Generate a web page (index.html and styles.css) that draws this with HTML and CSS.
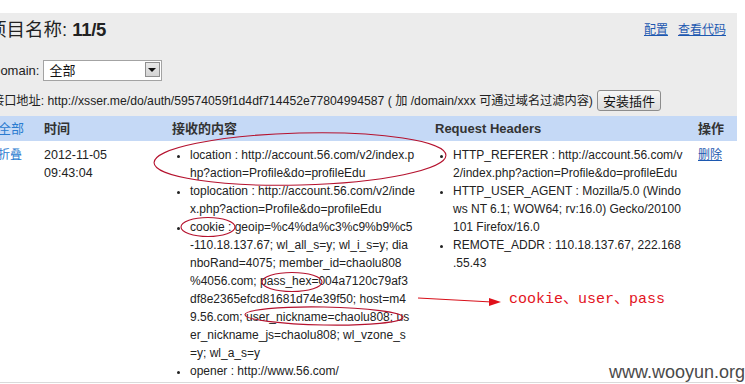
FILE: index.html
```html
<!DOCTYPE html>
<html lang="zh-CN">
<head>
<meta charset="utf-8">
<title>项目名称: 11/5</title>
<link rel="stylesheet" href="styles.css">
</head>
<body>
<div class="page">
  <div class="topbar">
    <h1 class="title">项目名称: <b>11/5</b></h1>
    <div class="links"><a href="#">配置</a><a href="#">查看代码</a></div>
  </div>
  <div class="domain-row">
    <label class="domain-label">Domain:</label>
    <span class="select-wrap"><select class="domain-select"><option>全部</option></select></span>
  </div>
  <div class="api-row">
    <span>接口地址: http://xsser.me/do/auth/59574059f1d4df714452e77804994587 ( 加 /domain/xxx 可通过域名过滤内容)</span>
    <button class="install">安装插件</button>
  </div>
  <table class="records">
    <colgroup>
      <col class="c1"><col class="c2"><col class="c3"><col class="c4"><col class="c5">
    </colgroup>
    <thead>
      <tr>
        <th class="first"><a class="plain" href="#">全部</a></th>
        <th>时间</th>
        <th>接收的内容</th>
        <th>Request Headers</th>
        <th>操作</th>
      </tr>
    </thead>
    <tbody>
      <tr>
        <td class="first"><a class="plain" href="#">折叠</a></td>
        <td class="time">2012-11-05<br>09:43:04</td>
        <td>
          <ul>
            <li>location : http://account.56.com/v2/index.p<br>hp?action=Profile&amp;do=profileEdu</li>
            <li>toplocation : http://account.56.com/v2/inde<br>x.php?action=Profile&amp;do=profileEdu</li>
            <li>cookie : geoip=%c4%da%c3%c9%b9%c5<br>-110.18.137.67; wl_all_s=y; wl_i_s=y; dia<br>nboRand=4075; member_id=chaolu808<br>%4056.com; pass_hex=004a7120c79af3<br>df8e2365efcd81681d74e39f50; host=m4<br>9.56.com; user_nickname=chaolu808; us<br>er_nickname_js=chaolu808; wl_vzone_s<br>=y; wl_a_s=y</li>
            <li>opener : http://www.56.com/</li>
          </ul>
        </td>
        <td>
          <ul>
            <li>HTTP_REFERER : http://account.56.com/v<br>2/index.php?action=Profile&amp;do=profileEdu</li>
            <li>HTTP_USER_AGENT : Mozilla/5.0 (Windo<br>ws NT 6.1; WOW64; rv:16.0) Gecko/20100<br>101 Firefox/16.0</li>
            <li>REMOTE_ADDR : 110.18.137.67, 222.168<br>.55.43</li>
          </ul>
        </td>
        <td><a href="#">删除</a></td>
      </tr>
    </tbody>
  </table>
</div>

<svg class="marks" width="745" height="384" viewBox="0 0 745 384" aria-hidden="true">
  <g fill="none" stroke="#b5122e" stroke-width="1.1">
    <ellipse cx="300" cy="159" rx="146" ry="26" transform="rotate(-1.5 300 159)"/>
    <ellipse cx="208" cy="227" rx="27" ry="9.5"/>
    <ellipse cx="292" cy="282" rx="30" ry="9.5"/>
    <ellipse cx="324" cy="316" rx="79" ry="9" transform="rotate(1 324 316)"/>
  </g>
  <line x1="418" y1="298" x2="492" y2="302" stroke="#d8101a" stroke-width="1.2"/>
  <polygon points="489,298 501,302 489,306" fill="#e0101a"/>
</svg>
<div class="note">cookie、user、pass</div>
<div class="watermark">www.wooyun.org</div>
</body>
</html>
```
FILE: styles.css
```css
html, body {
  margin: 0;
  padding: 0;
  background: #ffffff;
  overflow: hidden;
}
body {
  position: relative;
  width: 745px;
  height: 384px;
  font-family: "Liberation Sans", "Noto Sans CJK SC", Arial, sans-serif;
  font-size: 12px;
  color: #222;
}
a {
  color: #1c58b0;
}
.page {
  margin-top: 13px;
  margin-left: -20px;
  width: 757px;
  background: #ececec;
}
.topbar {
  display: flex;
  justify-content: space-between;
  align-items: center;
  height: 30px;
  padding-top: 2px;
}
.title {
  margin: 0;
  padding-left: 8px;
  font-size: 18.5px;
  font-weight: normal;
  line-height: 24px;
  color: #222;
}
.title b {
  font-weight: bold;
  letter-spacing: -0.3px;
}
.links {
  display: flex;
  gap: 10px;
  padding-right: 11px;
  font-size: 12px;
  margin-top: -4px;
}
.domain-row {
  display: flex;
  align-items: center;
  gap: 4px;
  padding-left: 11px;
  margin-top: 14px;
  height: 22px;
  font-size: 13px;
}
.select-wrap {
  position: relative;
  display: inline-block;
}
.domain-select {
  appearance: none;
  -webkit-appearance: none;
  width: 119px;
  height: 21px;
  border: 1px solid #a3a3a3;
  border-radius: 0;
  background: #fff;
  padding: 0 0 0 5px;
  font-family: "Liberation Sans", "Noto Sans CJK SC", sans-serif;
  font-size: 13px;
  color: #111;
  display: block;
}
.select-wrap::after {
  content: "";
  position: absolute;
  right: 2px;
  top: 2px;
  width: 15px;
  height: 15px;
  box-sizing: border-box;
  border: 1px solid #8f8f8f;
  background: linear-gradient(#e9e9e9, #d4d4d4);
}
.select-wrap::before {
  content: "";
  position: absolute;
  z-index: 1;
  right: 6px;
  top: 8px;
  width: 0;
  height: 0;
  border-left: 4px solid transparent;
  border-right: 4px solid transparent;
  border-top: 4px solid #111;
}
.api-row {
  display: flex;
  align-items: center;
  gap: 4px;
  padding-left: 12px;
  margin-top: 8px;
  height: 22px;
  font-size: 12.2px;
  white-space: nowrap;
}
.install {
  height: 21px;
  padding: 0 5px;
  border: 1px solid #8c8c8c;
  border-radius: 3px;
  background: linear-gradient(#f7f7f7, #dcdcdc);
  font-family: "Noto Sans CJK SC", sans-serif;
  font-size: 13px;
  line-height: 17px;
  color: #111;
}
.records {
  margin-top: 5px;
  width: 757px;
  border-collapse: collapse;
  table-layout: fixed;
}
.c1 { width: 60px; }
.c2 { width: 128px; }
.c3 { width: 263px; }
.c4 { width: 263px; }
.c5 { width: 43px; }
.records th {
  background: #c5d9f6;
  text-align: left;
  font-size: 13px;
  font-weight: bold;
  color: #333;
  line-height: 18px;
  padding: 4px 0 3px 4px;
}
.records th.first {
  font-weight: normal;
}
.records td {
  background: #fff;
  vertical-align: top;
  line-height: 18px;
  padding: 5px 0 2px 4px;
  border-bottom: 1px solid #dadada;
  white-space: nowrap;
  font-size: 12px;
}
.records td.time {
  font-size: 12.5px;
}
.records .first {
  padding-left: 18px;
}
a.plain {
  text-decoration: none;
  color: #2a7bd0;
}
.records ul {
  margin: 0;
  padding-left: 18px;
  list-style: disc;
}
.records li::marker {
  font-size: 11px;
}
.marks {
  position: absolute;
  left: 0;
  top: 0;
  pointer-events: none;
}
.note {
  position: absolute;
  left: 509px;
  top: 291px;
  font-family: "Liberation Mono", "Noto Sans CJK SC", monospace;
  font-size: 15px;
  line-height: 18px;
  color: #e3141e;
  white-space: nowrap;
}
.watermark {
  position: absolute;
  left: 609px;
  top: 362px;
  font-size: 18px;
  line-height: 20px;
  color: #4a4a4a;
  white-space: nowrap;
}
```
